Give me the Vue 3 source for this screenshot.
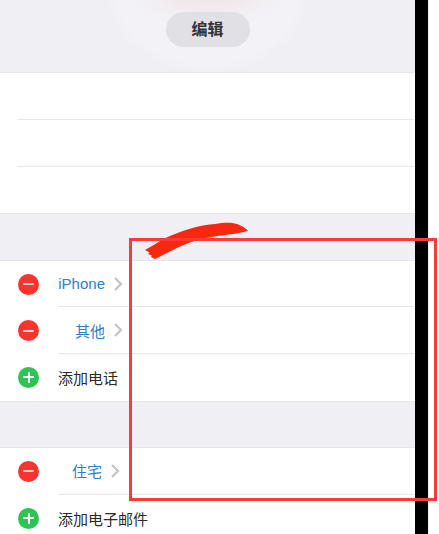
<script setup>
const phones = [
  { label: 'iPhone', width: '47px' },
  { label: '其他', width: '47px' },
]
</script>

<template>
  <div class="screen">
    <div class="phone">
      <header class="hero">
        <div class="halo"></div>
        <div class="blob"></div>
        <button class="edit-btn">编辑</button>
      </header>

      <section class="group name-group">
        <div class="name-row"></div>
        <div class="name-row"></div>
        <div class="name-row"></div>
      </section>

      <div class="gap"></div>

      <section class="group">
        <div v-for="item in phones" :key="item.label" class="row">
          <span class="badge minus"><i class="bar"></i></span>
          <div class="row-body">
            <span class="label" :style="{ width: item.width }">{{ item.label }}</span>
            <svg class="chevron" width="10" height="16" viewBox="0 0 10 16">
              <path d="M2 2l6 6-6 6" fill="none" stroke="#c4c4c8" stroke-width="2.2" />
            </svg>
          </div>
        </div>
        <div class="row">
          <span class="badge plus"><i class="bar"></i><i class="bar vert"></i></span>
          <div class="row-body">
            <span class="add-text">添加电话</span>
          </div>
        </div>
      </section>

      <div class="gap"></div>

      <section class="group">
        <div class="row">
          <span class="badge minus"><i class="bar"></i></span>
          <div class="row-body">
            <span class="label home">住宅</span>
            <svg class="chevron" width="10" height="16" viewBox="0 0 10 16">
              <path d="M2 2l6 6-6 6" fill="none" stroke="#c4c4c8" stroke-width="2.2" />
            </svg>
          </div>
        </div>
        <div class="row">
          <span class="badge plus"><i class="bar"></i><i class="bar vert"></i></span>
          <div class="row-body">
            <span class="add-text">添加电子邮件</span>
          </div>
        </div>
      </section>
    </div>

    <div class="black-bar"></div>
    <div class="margin-strip"></div>

    <!-- 标注：笔刷和红框 -->
    <svg class="brush" width="104" height="40" viewBox="0 0 104 40">
      <path
        d="M0 29 L12 22 C18 18 24 15 30 13 C42 8 56 4 70 3 C76 2 82 1.5 87 2 C94 3 100 6 103 10 C96 12 88 13 80 14 C70 15 60 17 52 19 C42 22 34 26 28 29 L10 38 L6 36 L7 34.5 L3 33 L4.5 31.5 Z"
        fill="#f8270f"
      />
    </svg>
    <div class="red-box"></div>
  </div>
</template>

<style scoped>
.screen {
  position: relative;
  display: flex;
  width: 439px;
  height: 534px;
  overflow: hidden;
  background: #fff;
  font-family: "Liberation Sans", "Noto Sans CJK SC", sans-serif;
}

.phone {
  width: 415px;
  height: 534px;
  flex: none;
  overflow: hidden;
  background: #fff;
}

.black-bar {
  width: 13px;
  flex: none;
  background: #000;
}

.margin-strip {
  flex: 1;
  border-left: 1px solid #f0f0f2;
  background: #fff;
}

.hero {
  position: relative;
  height: 73px;
  display: flex;
  justify-content: center;
  align-items: flex-start;
  padding-top: 12px;
  box-sizing: border-box;
  overflow: hidden;
  background: #f0eff4;
  border-bottom: 1px solid #e6e6e8;
}

.halo {
  position: absolute;
  left: 110px;
  top: -90px;
  width: 196px;
  height: 160px;
  border-radius: 50%;
  background: #f3f2f6;
  filter: blur(6px);
}

.blob {
  position: absolute;
  left: 150px;
  top: -42px;
  width: 116px;
  height: 54px;
  border-radius: 50%;
  background: #efe6e8;
  filter: blur(10px);
}

.edit-btn {
  position: relative;
  width: 84px;
  height: 35px;
  padding: 0 0 3px;
  border: none;
  border-radius: 18px;
  background: #e1e0e4;
  color: #333335;
  font-family: inherit;
  font-size: 16px;
  font-weight: 700;
}

.group {
  background: #fff;
}

.name-group {
  padding-left: 17px;
}

.name-row {
  height: 46.8px;
  border-bottom: 1px solid #e8e8ea;
  box-sizing: border-box;
}

.name-row:last-child {
  border-bottom: none;
}

.gap {
  height: 47.3px;
  box-sizing: border-box;
  background: #f0eff4;
  border-top: 1px solid #e6e6e8;
  border-bottom: 1px solid #e6e6e8;
}

.row {
  display: flex;
  align-items: center;
  height: 46.7px;
}

.badge {
  position: relative;
  width: 21px;
  height: 21px;
  margin: 0 19px 0 18px;
  flex: none;
  border-radius: 50%;
}

.minus {
  background: #f9342f;
}

.plus {
  background: #2fc353;
}

.bar {
  position: absolute;
  left: 5px;
  top: 9.5px;
  width: 11px;
  height: 2px;
  background: #fff;
  border-radius: 1px;
}

.minus .bar {
  background: #f3d0cc;
}

.vert {
  left: 9.5px;
  top: 5px;
  width: 2px;
  height: 11px;
}

.row-body {
  flex: 1;
  height: 100%;
  display: flex;
  align-items: center;
  box-sizing: border-box;
  border-bottom: 1px solid #e8e8ea;
}

.row:last-child .row-body {
  border-bottom: none;
}

.label {
  color: #2f7fc4;
  font-size: 15px;
  text-align: right;
  white-space: nowrap;
}

.home {
  width: 44px;
}

.chevron {
  margin-left: 8px;
}

.add-text {
  color: #2a2a2a;
  font-size: 15px;
}

.red-box {
  position: absolute;
  left: 129px;
  top: 238px;
  width: 308px;
  height: 263px;
  box-sizing: border-box;
  border: 3.5px solid #fb3a3a;
}

.brush {
  position: absolute;
  left: 145px;
  top: 221px;
}
</style>
